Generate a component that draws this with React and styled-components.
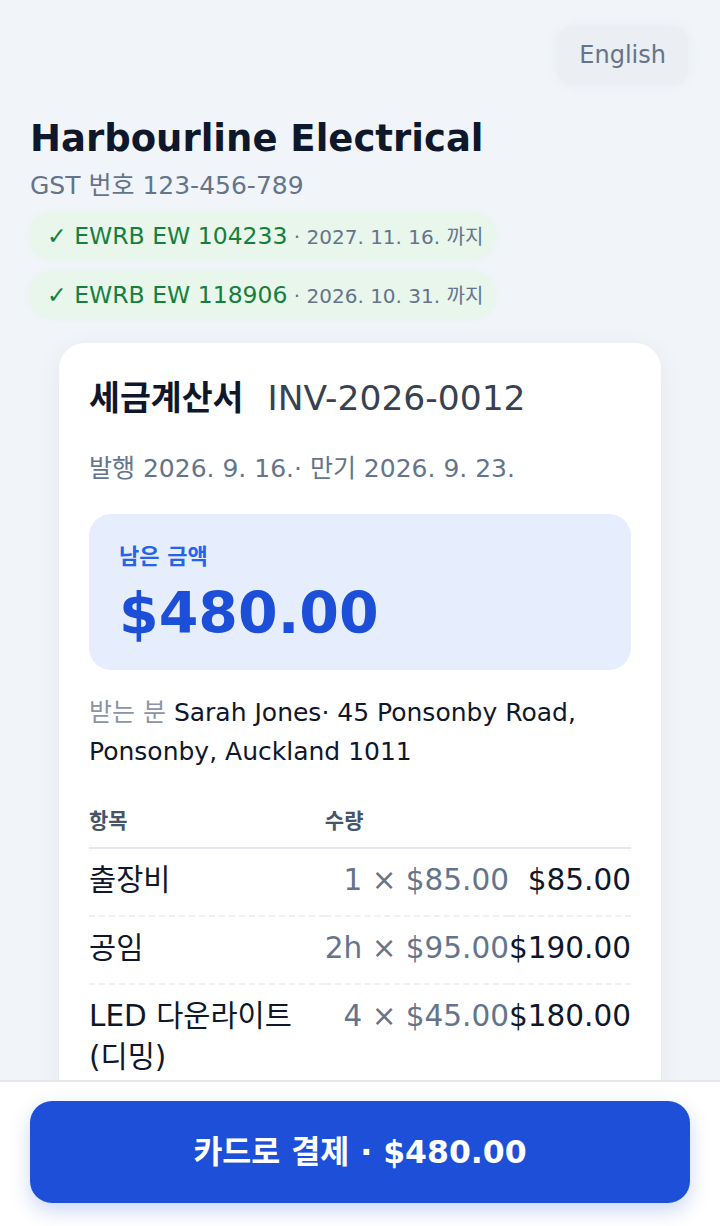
import styled, { createGlobalStyle } from "styled-components";

const GlobalStyle = createGlobalStyle`
  html, body {
    margin: 0;
    height: 100%;
  }

  body {
    font-family: "DejaVu Sans", "Noto Sans CJK KR", sans-serif;
    background: #f1f5f9;
    color: #0f172a;
  }

  #root {
    height: 100%;
  }
`;

const Shell = styled.div`
  display: flex;
  flex-direction: column;
  height: 100vh;
`;

const Scroll = styled.main`
  flex: 1;
  overflow-y: auto;
  scrollbar-width: none;
  padding: 26px 30px 40px;

  &::-webkit-scrollbar {
    display: none;
  }
`;

const TopBar = styled.div`
  display: flex;
  justify-content: flex-end;
  padding-right: 2px;
`;

const LangButton = styled.button`
  font-family: inherit;
  font-size: 24px;
  line-height: 31px;
  padding: 14px 22px;
  border: 0;
  border-radius: 16px;
  background: #ebeef3;
  box-shadow: 0 0 10px rgba(230, 234, 241, 0.8);
  color: #64748b;
`;

const Business = styled.header`
  margin-top: 32px;
`;

const Title = styled.h1`
  font-size: 37px;
  font-weight: 700;
  line-height: 44px;
  margin: 0 0 8px;
  color: #0f172a;
`;

const Gst = styled.p`
  margin: 0;
  font-size: 25px;
  line-height: 34px;
  color: #64748b;
`;

const Badges = styled.div`
  display: flex;
  flex-direction: column;
  align-items: flex-start;
  gap: 13px;
  margin-top: 10px;
`;

const Badge = styled.div`
  display: inline-flex;
  align-items: baseline;
  padding: 9px 12px 8px 17px;
  border-radius: 999px;
  background: #e8f6ec;
  box-shadow: 0 0 6px rgba(222, 244, 229, 0.9);
  color: #15803d;
  font-size: 23.5px;
  line-height: 28px;
  white-space: pre;
`;

const BadgeNote = styled.span`
  font-size: 20px;
  color: #64748b;
`;

const Card = styled.section`
  box-sizing: border-box;
  max-width: 602px;
  margin: 25px auto 0;
  padding: 31px 30px 30px;
  background: #ffffff;
  border-radius: 26px;
  box-shadow: 0 6px 28px rgba(15, 23, 42, 0.06);
`;

const CardHead = styled.div`
  display: flex;
  align-items: baseline;
  gap: 24px;
  line-height: 48px;
`;

const DocType = styled.span`
  font-size: 33.6px;
  font-weight: 700;
  color: #0f172a;
`;

const DocNo = styled.span`
  font-size: 34.5px;
  color: #374151;
`;

const Dates = styled.p`
  margin: 28px 0 0;
  font-size: 25px;
  line-height: 36px;
  color: #64748b;
`;

const AmountBox = styled.div`
  margin-top: 27px;
  padding: 28px 30px 24px;
  border-radius: 22px;
  background: #e6eefd;
`;

const AmountLabel = styled.div`
  font-size: 22px;
  font-weight: 700;
  line-height: 29px;
  color: #2563eb;
`;

const AmountValue = styled.div`
  margin-top: 10px;
  font-size: 57px;
  font-weight: 700;
  line-height: 65px;
  color: #1d4ed8;
`;

const Recipient = styled.p`
  margin: 23px 0 0;
  font-size: 25px;
  line-height: 39px;
  color: #0f172a;
`;

const Muted = styled.span`
  color: #8b95a7;
`;

const Items = styled.table`
  width: 100%;
  margin-top: 35px;
  border-collapse: collapse;
`;

const Th = styled.th`
  padding: 0 0 11px;
  font-size: 21px;
  font-weight: 700;
  line-height: 30px;
  color: #475569;
  text-align: left;
  border-bottom: 2px solid #e5e9ef;
`;

const Td = styled.td`
  padding: 11px 0 14px;
  font-size: 29.5px;
  line-height: 41px;
  vertical-align: top;
  text-align: ${(p) => (p.$num ? "right" : "left")};
  white-space: ${(p) => (p.$num ? "nowrap" : "normal")};
  color: ${(p) => (p.$muted ? "#64748b" : "#0f172a")};
  border-bottom: 2px dashed #edf0f4;
`;

const Footer = styled.footer`
  flex-shrink: 0;
  padding: 19px 30px 23px;
  background: #ffffff;
  border-top: 2px solid #e5e7eb;
`;

const PayButton = styled.button`
  display: block;
  width: 100%;
  padding: 30px;
  border: 0;
  border-radius: 22px;
  background: #1d4fd8;
  box-shadow: 0 8px 20px rgba(29, 78, 216, 0.22);
  font-family: inherit;
  font-size: 31.5px;
  font-weight: 700;
  line-height: 42px;
  color: #ffffff;
`;

const licences = [
  { id: "104233", until: "2027. 11. 16." },
  { id: "118906", until: "2026. 10. 31." },
];

const lines = [
  { name: "출장비", qty: "1 × $85.00", total: "$85.00" },
  { name: "공임", qty: "2h × $95.00", total: "$190.00" },
  { name: "LED 다운라이트 (디밍)", qty: "4 × $45.00", total: "$180.00" },
];

export default function App() {
  return (
    <>
      <GlobalStyle />
      <Shell>
        <Scroll>
          <TopBar>
            <LangButton>English</LangButton>
          </TopBar>

          <Business>
            <Title>Harbourline Electrical</Title>
            <Gst>GST 번호 123-456-789</Gst>
            <Badges>
              {licences.map((l) => (
                <Badge key={l.id}>
                  ✓ EWRB EW {l.id}
                  <BadgeNote> · {l.until} 까지</BadgeNote>
                </Badge>
              ))}
            </Badges>
          </Business>

          <Card>
            <CardHead>
              <DocType>세금계산서</DocType>
              <DocNo>INV-2026-0012</DocNo>
            </CardHead>
            <Dates>발행 2026. 9. 16.· 만기 2026. 9. 23.</Dates>

            <AmountBox>
              <AmountLabel>남은 금액</AmountLabel>
              <AmountValue>$480.00</AmountValue>
            </AmountBox>

            <Recipient>
              <Muted>받는 분</Muted> Sarah Jones· 45 Ponsonby Road, Ponsonby,
              Auckland 1011
            </Recipient>

            <Items>
              <thead>
                <tr>
                  <Th>항목</Th>
                  <Th>수량</Th>
                  <Th />
                </tr>
              </thead>
              <tbody>
                {lines.map((line) => (
                  <tr key={line.name}>
                    <Td>{line.name}</Td>
                    <Td $num $muted>
                      {line.qty}
                    </Td>
                    <Td $num>{line.total}</Td>
                  </tr>
                ))}
              </tbody>
            </Items>
          </Card>
        </Scroll>

        <Footer>
          <PayButton>카드로 결제 · $480.00</PayButton>
        </Footer>
      </Shell>
    </>
  );
}
